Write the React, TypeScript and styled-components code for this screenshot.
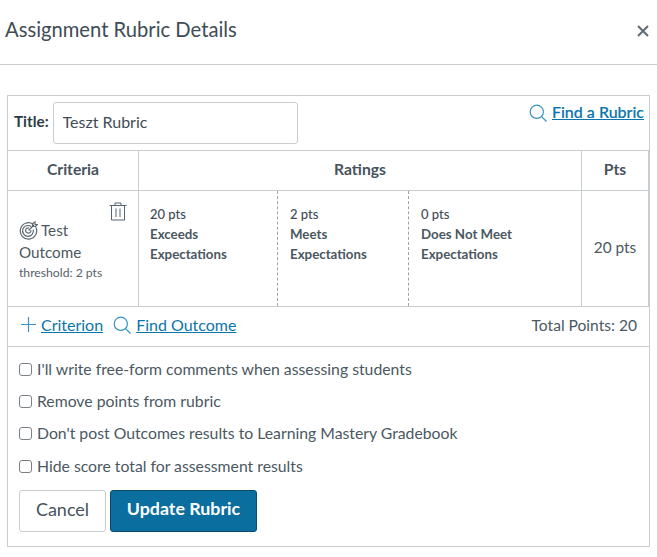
import React from "react";
import styled, { createGlobalStyle } from "styled-components";

const Global = createGlobalStyle`
  html, body { margin: 0; padding: 0; background: #fff; }
  body { font-family: Lato, "Noto Sans", sans-serif; color: #2d3b45; }
`;
const Page = styled.div`width: 657px; height: 557px; overflow: hidden; background: #fff;`;
const Header = styled.header`
  height: 47px; border-bottom: 1px solid #c7cdd1; display: flex; align-items: flex-start;
  justify-content: space-between; padding: 17px 8px 0 5px; box-sizing: content-box;
`;
const Heading = styled.h1`margin: 0; font-size: 20.2px; font-weight: 400; line-height: 24px; color: #3f4c56;`;
const Close = styled.button`
  border: 0; background: none; padding: 0; margin: 8px 0 0; width: 12px; height: 12px; display: block; color: #5f6b75;
`;
const Box = styled.div`
  margin: 30px 0 0 7px; width: 643px; height: 452px; box-sizing: border-box; border: 1px solid #c7cdd1;
  display: flex; flex-direction: column;
`;
const TitleRow = styled.div`
  flex: none; display: flex; align-items: flex-start; justify-content: space-between;
  padding: 6px 5px 0 6px; border-bottom: 1px solid #c7cdd1; box-sizing: content-box; height: 48px;
`;
const TitleLeft = styled.div`display: flex; align-items: center; gap: 4px;`;
const TitleLabel = styled.label`font-size: 15.3px; font-weight: 700; color: #2d3b45; padding-bottom: 4px;`;
const TitleInput = styled.input`
  width: 245px; height: 42px; box-sizing: border-box; border: 1px solid #c7cdd1; border-radius: 3px;
  padding: 0 9px 4px; font: 400 16px Lato, sans-serif; color: #3f4c56; outline: none; background: #fff;
`;
const TextLink = styled.a`font-size: 16px; color: #0a75ad; text-decoration: underline; line-height: 18px;`;
const BoldLink = styled(TextLink)`font-weight: 500; -webkit-text-stroke: 0.2px #0a75ad; margin-top: -2px;`;
const LinkWrap = styled.span`display: inline-flex; align-items: center; gap: 5px; color: #0374b5;`;
const FindRubric = styled(LinkWrap)`margin-top: 2px;`;
const Grid = styled.div`
  display: grid; grid-template-columns: 131px 1fr 66px; flex: none; margin-right: 1px;
  box-shadow: 1px 0 0 #c7cdd1;
`;
const HeadCell = styled.div<{ $line?: boolean }>`
  height: 35px; padding-bottom: 4px; border-bottom: 1px solid #c7cdd1; display: flex; align-items: center; justify-content: center;
  font-size: 15.7px; font-weight: 700; color: #46535d; box-sizing: content-box;
  ${(p) => (p.$line ? "border-right: 1px solid #c7cdd1;" : "")}
`;
const BodyCell = styled.div<{ $line?: boolean }>`
  height: 115px; border-bottom: 1px solid #c7cdd1; box-sizing: content-box; position: relative;
  ${(p) => (p.$line ? "border-right: 1px solid #c7cdd1;" : "")}
`;
const Criterion = styled(BodyCell)`display: flex; flex-direction: column; padding: 28px 0 0 11px; height: 87px;`;
const CritTop = styled.div`display: flex; align-items: center; gap: 3px; font-size: 15.2px; line-height: 22px; color: #4b5862;`;
const CritText = styled.div`font-size: 15.2px; line-height: 22px; color: #4b5862;`;
const Threshold = styled.div`font-size: 12.2px; line-height: 20px; color: #56626b;`;
const Trash = styled.span`position: absolute; top: 11px; right: 11px; width: 18px; height: 19px; color: #556572;`;
const Ratings = styled(BodyCell)`display: grid; grid-template-columns: 138px 131px 1fr;`;
const Rating = styled.div<{ $dashed?: boolean }>`
  padding: 13px 0 0 ${(p) => (p.$dashed ? "12px" : "11px")}; font-size: 13px; line-height: 20px; font-weight: 500; color: #3f4c56;
  ${(p) => (p.$dashed ? "border-left: 1px dashed #9aa4ab;" : "")}
`;
const RatingName = styled.div`font-weight: 700; font-size: 13.3px; color: #4a5761;`;
const PtsCell = styled(BodyCell)`display: flex; align-items: center; justify-content: center; padding-bottom: 4px; height: 111px; font-size: 15.4px; color: #4b5862;`;
const Footer = styled.div`
  height: 35px; padding: 0 12px 4px 13px; flex: none; border-bottom: 1px solid #c7cdd1; display: flex; align-items: center;
  justify-content: space-between; box-sizing: content-box;
`;
const FooterLinks = styled.div`display: flex; align-items: center; gap: 10px;`;
const Total = styled.div`font-size: 15.6px; color: #4b5862;`;
const Options = styled.div`padding: 13px 11px 0; display: flex; flex-direction: column;`;
const OptionRow = styled.label`
  display: flex; gap: 5px; height: 32.2px; font-size: 15.77px; color: #4b5862;
  line-height: 18px; align-items: flex-start;
`;
const Check = styled.span`
  width: 11px; height: 11px; margin-top: 3px; border: 1px solid #7a7f84; border-radius: 3px; flex: none; background: #fff;
`;
const Buttons = styled.div`display: flex; gap: 4px; margin-top: 1px;`;
const Cancel = styled.button`
  height: 42px; width: 87px; box-sizing: border-box; border: 1px solid #c7cdd1; border-radius: 3px; background: #fff;
  padding: 0 0 4px; font: 400 18px Lato, sans-serif; color: #46535d;
`;
const Update = styled.button`
  height: 42px; width: 147px; box-sizing: border-box; border: 1px solid #0b4a6f; border-radius: 3px; background: #0a6f9f;
  padding: 0 0 5px; font: 700 17.8px Lato, sans-serif; color: #fff;
`;

const Search = () => (
  <svg width="18" height="18" viewBox="0 0 18 18" fill="none" stroke="#3a93c4" strokeWidth="1.2">
    <circle cx="7.8" cy="7.8" r="6.6" />
    <path d="M12.6 12.6 17.5 17.5" />
  </svg>
);
const Plus = () => (
  <svg width="15" height="15" viewBox="0 0 15 15" stroke="#3a93c4" strokeWidth="1.2">
    <path d="M7.5 0v15M0 7.5h15" />
  </svg>
);
const Target = () => (
  <svg width="19" height="19" viewBox="0 0 19 19" fill="none" stroke="#5b6770" strokeWidth="1.2">
    <path d="M14.2 3.2a8.2 8.2 0 1 0 2.6 3" />
    <path d="M12.2 5.6a5.4 5.4 0 1 0 2 3" />
    <path d="M10 6.9a2.7 2.7 0 1 0 2 2.4" />
    <path d="M9.5 9.5 15 4M13.5 2.5v3h3l2-2H16V1Z" />
  </svg>
);

export default function App() {
  return (
    <Page>
      <Global />
      <Header>
        <Heading>Assignment Rubric Details</Heading>
        <Close aria-label="Close">
          <svg width="12" height="12" viewBox="0 0 12 12" stroke="currentColor" strokeWidth="2">
            <path d="M1 1l10 10M11 1 1 11" />
          </svg>
        </Close>
      </Header>
      <Box>
        <TitleRow>
          <TitleLeft>
            <TitleLabel>Title:</TitleLabel>
            <TitleInput defaultValue="Teszt Rubric" />
          </TitleLeft>
          <FindRubric>
            <Search />
            <BoldLink href="#">Find a Rubric</BoldLink>
          </FindRubric>
        </TitleRow>
        <Grid>
          <HeadCell $line>Criteria</HeadCell>
          <HeadCell $line>Ratings</HeadCell>
          <HeadCell>Pts</HeadCell>
          <Criterion $line>
            <CritTop>
              <Target />
              Test
            </CritTop>
            <CritText>Outcome</CritText>
            <Threshold>threshold: 2 pts</Threshold>
            <Trash>
              <svg width="18" height="19" viewBox="0 0 18 19" fill="none" stroke="currentColor" strokeWidth="1">
                <path d="M0.5 3.5h17M6 3.5V1h6v2.5M2.5 3.5v14.5h13V3.5M7 6.5v8.5M11 6.5v8.5" />
              </svg>
            </Trash>
          </Criterion>
          <Ratings $line>
            <Rating>
              20 pts
              <RatingName>
                Exceeds
                <br />
                Expectations
              </RatingName>
            </Rating>
            <Rating $dashed>
              2 pts
              <RatingName>
                Meets
                <br />
                Expectations
              </RatingName>
            </Rating>
            <Rating $dashed>
              0 pts
              <RatingName>
                Does Not Meet
                <br />
                Expectations
              </RatingName>
            </Rating>
          </Ratings>
          <PtsCell>20 pts</PtsCell>
        </Grid>
        <Footer>
          <FooterLinks>
            <LinkWrap>
              <Plus />
              <TextLink href="#">Criterion</TextLink>
            </LinkWrap>
            <LinkWrap>
              <Search />
              <TextLink href="#">Find Outcome</TextLink>
            </LinkWrap>
          </FooterLinks>
          <Total>Total Points: 20</Total>
        </Footer>
        <Options>
          {[
            "I'll write free-form comments when assessing students",
            "Remove points from rubric",
            "Don't post Outcomes results to Learning Mastery Gradebook",
            "Hide score total for assessment results",
          ].map((t) => (
            <OptionRow key={t}>
              <Check />
              {t}
            </OptionRow>
          ))}
          <Buttons>
            <Cancel>Cancel</Cancel>
            <Update>Update Rubric</Update>
          </Buttons>
        </Options>
      </Box>
    </Page>
  );
}
